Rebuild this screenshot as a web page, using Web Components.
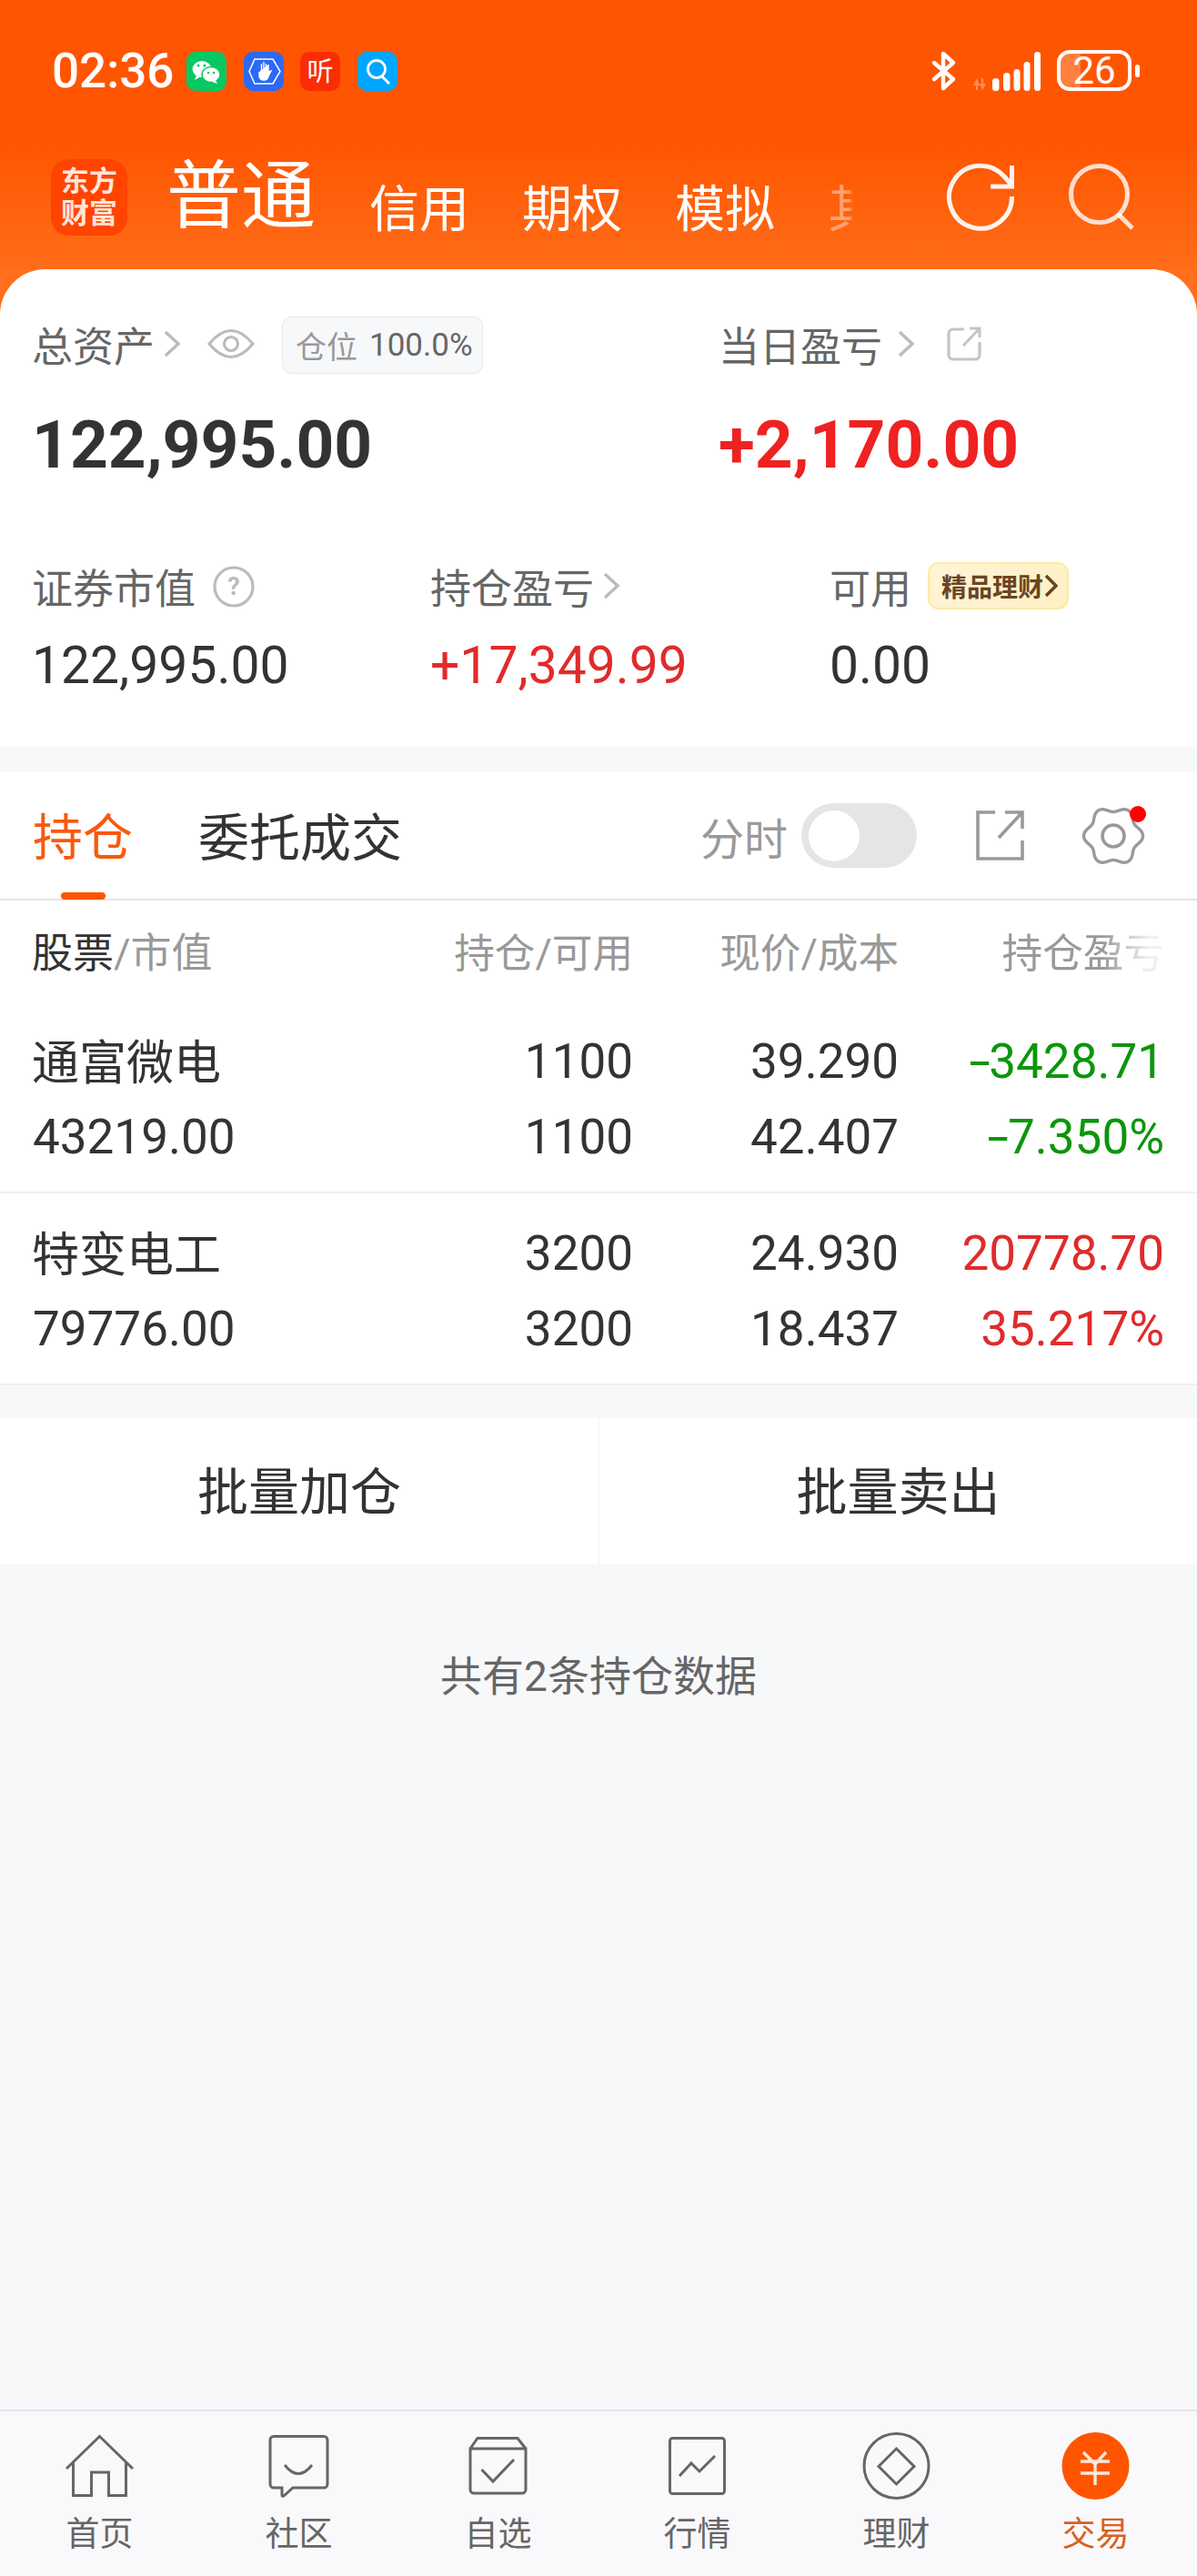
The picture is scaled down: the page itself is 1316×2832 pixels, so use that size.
<!DOCTYPE html>
<html lang="zh">
<head>
<meta charset="utf-8">
<title>交易</title>
<style>
  html, body { margin: 0; padding: 0; }
  body {
    width: 1316px;
    height: 2832px;
    overflow: hidden;
    background: #f7f8fa;
    font-family: Roboto, "Noto Sans CJK SC", sans-serif;
    color: #333;
  }
</style>
</head>
<body>
<app-shell>
  <status-bar></status-bar>
  <top-bar></top-bar>
  <asset-card>
    <asset-stat slot="top" size="lg" value="122,995.00">
      总资产<ui-icon name="chevron"></ui-icon><ui-icon name="eye"></ui-icon><pos-badge>100.0%</pos-badge>
    </asset-stat>
    <asset-stat slot="top" size="lg" tone="up" value="+2,170.00">
      当日盈亏<ui-icon name="chevron" style="margin-left:17px"></ui-icon><ui-icon name="export"></ui-icon>
    </asset-stat>
    <asset-stat slot="bottom" value="122,995.00">
      证券市值<ui-icon name="help"></ui-icon>
    </asset-stat>
    <asset-stat slot="bottom" tone="up" value="+17,349.99">
      持仓盈亏<ui-icon name="chevron"></ui-icon>
    </asset-stat>
    <asset-stat slot="bottom" value="0.00">
      可用<gold-badge>精品理财</gold-badge>
    </asset-stat>
  </asset-card>
  <position-tabs></position-tabs>
  <table-head></table-head>
  <stock-row name="通富微电" cap="43219.00" hold="1100" free="1100" price="39.290" cost="42.407" pnl="-3428.71" pct="-7.350%" tone="down"></stock-row>
  <stock-row name="特变电工" cap="79776.00" hold="3200" free="3200" price="24.930" cost="18.437" pnl="20778.70" pct="35.217%" tone="up" last></stock-row>
  <batch-actions></batch-actions>
  <list-note>共有2条持仓数据</list-note>
  <tab-bar>
    <nav-item icon="home">首页</nav-item>
    <nav-item icon="chat">社区</nav-item>
    <nav-item icon="watch">自选</nav-item>
    <nav-item icon="chart">行情</nav-item>
    <nav-item icon="wealth">理财</nav-item>
    <nav-item icon="trade" active>交易</nav-item>
  </tab-bar>
</app-shell>

<script>
"use strict";

////////////////////////////////////////////
// Constants
const ORANGE = "#ff5500";
const RED = "#e02b2b";
const GREEN = "#0a960a";

// Gear outline: six lobes, sampled around the circle
const gearPath = function (cx, cy, radius, depth) {
  const points = [];
  for (let i = 0; i < 120; i++) {
    const angle = (i / 120) * Math.PI * 2;
    const r = radius + depth * Math.cos(6 * angle);
    points.push(`${(cx + r * Math.cos(angle)).toFixed(1)} ${(cy + r * Math.sin(angle)).toFixed(1)}`);
  }
  return `M${points.join("L")}Z`;
};

// name: [width, height, markup]
const ICONS = {
  chevron: [18, 30, `<path d="M2 2 L16 15 L2 28" fill="none" stroke="#bbb" stroke-width="3.4"/>`],
  eye: [52, 36, `<path d="M2 18 Q26 -11 50 18 Q26 47 2 18Z" fill="none" stroke="#bbb" stroke-width="3.2"/><circle cx="26" cy="18" r="7.5" fill="none" stroke="#bbb" stroke-width="3.2"/>`],
  export: [38, 38, `<path d="M19 3 H7 a5 5 0 0 0 -5 5 V31 a5 5 0 0 0 5 5 H31 a5 5 0 0 0 5 -5 V17" fill="none" stroke="#c4c4c4" stroke-width="3.2"/><path d="M18 21 L36 2 M25 2 H36 V12" fill="none" stroke="#c4c4c4" stroke-width="3"/>`],
  help: [46, 46, `<circle cx="23" cy="23" r="21" fill="none" stroke="#bbb" stroke-width="3.2"/><text x="23" y="32" text-anchor="middle" font-size="27" font-weight="700" fill="#bbb">?</text>`],
  refresh: [74, 72, `<path d="M71.5 36 A34.5 34.5 0 1 1 63 14 L71 23" fill="none" stroke="#fff" stroke-opacity=".92" stroke-width="5"/><path d="M71.5 2 V25 H48" fill="none" stroke="#fff" stroke-opacity=".92" stroke-width="5"/>`],
  search: [72, 72, `<circle cx="33.5" cy="33.5" r="31" fill="none" stroke="#fff" stroke-opacity=".8" stroke-width="5"/><path d="M54 55 L70 71" stroke="#fff" stroke-opacity=".8" stroke-width="5"/>`],
  share: [53, 55, `<path d="M21 2 H2 V53 H51 V33 M32 2 H51 V20 M25 30 L51 2" fill="none" stroke="#999" stroke-width="3.6"/>`],
  gear: [66, 66, `<path d="${gearPath(32, 33, 29.5, 3)}" fill="none" stroke="#999" stroke-width="3.4" stroke-linejoin="round"/><circle cx="32" cy="33" r="12" fill="none" stroke="#999" stroke-width="3.6"/><circle cx="59" cy="9" r="9" fill="#f00"/>`],
  home: [75, 68, `<path d="M1 37 L37.5 1.5 L74 37" fill="none" stroke="#666" stroke-width="3"/><path d="M8.5 29 V66.5 H28.5 V41 H47.5 V66.5 H66.5 V29" fill="none" stroke="#666" stroke-width="3"/>`],
  chat: [67, 69, `<path d="M6 1.5 H61 a4 4 0 0 1 4 4 V54 a4 4 0 0 1 -4 4 H27 L17 67 Q15 68 15 66 V58 H6 a4 4 0 0 1 -4 -4 V5.5 a4 4 0 0 1 4 -4Z" fill="none" stroke="#666" stroke-width="3"/><path d="M18 33 Q33 52 48 33" fill="none" stroke="#666" stroke-width="3"/>`],
  watch: [65, 65, `<path d="M2 13 L10 1.5 H54 L63 13 M2 13 H63 V58 a4 4 0 0 1 -4 4 H6 a4 4 0 0 1 -4 -4Z" fill="none" stroke="#666" stroke-width="3"/><path d="M14.5 36 L27 49 L50 25" fill="none" stroke="#666" stroke-width="3"/>`],
  chart: [63, 64, `<rect x="1.5" y="1.5" width="60" height="61" rx="3" fill="none" stroke="#666" stroke-width="3"/><path d="M12 43 L25 29 L34 38 L51 21" fill="none" stroke="#666" stroke-width="3"/>`],
  wealth: [75, 74, `<circle cx="37.5" cy="37" r="35.5" fill="none" stroke="#666" stroke-width="3"/><path d="M37.5 18 L57 37.5 L37.5 57 L18 37.5Z" fill="none" stroke="#666" stroke-width="3"/>`],
  trade: [75, 74, `<circle cx="37.5" cy="37" r="37" fill="${ORANGE}"/><path d="M24 22 L37 35 L49 22 M37 35 V58 M21 32 H53 M21 45 H53" fill="none" stroke="#ffe9dc" stroke-width="3.4"/>`],
  wechat: [44, 43, `<rect width="44" height="43" rx="10" fill="#07c863"/><ellipse cx="17" cy="19" rx="10.5" ry="9" fill="#fff"/><path d="M11 26 L9 31 L16 27Z" fill="#fff"/><ellipse cx="27" cy="25" rx="10" ry="8.5" fill="#fff" stroke="#07c863" stroke-width="1.5"/><path d="M32 31 L34 35 L28 33Z" fill="#fff"/><circle cx="13" cy="15" r="1.5" fill="#07c863"/><circle cx="20" cy="15" r="1.5" fill="#07c863"/><circle cx="24" cy="23" r="1.3" fill="#07c863"/><circle cx="30" cy="23" r="1.3" fill="#07c863"/>`],
  guard: [44, 43, `<rect width="44" height="43" rx="10" fill="#2b69f6"/><path d="M12 8 H32 L40 21.5 L32 35 H12 L6 21.5Z" fill="none" stroke="#fff" stroke-width="1.5"/><path d="M17 22 V27 Q18 31 22 31 Q26 31 27 27 L30 21 L27 22 V14 M24.5 13 V21 M22 11 V21 M19.5 13 V21" fill="#fff" stroke="#fff" stroke-width="1.4"/>`],
  listen: [44, 43, `<rect width="44" height="43" rx="10" fill="#fa2d05"/><text x="22" y="32" text-anchor="middle" font-size="29" fill="#fff" font-family="'Noto Sans CJK SC'">听</text>`],
  lens: [44, 43, `<rect width="44" height="43" rx="10" fill="#00a6ff"/><circle cx="21" cy="19" r="9.5" fill="none" stroke="#fff" stroke-width="2.8"/><path d="M27 27 L35 35" stroke="#fff" stroke-width="2.8"/>`],
  bluetooth: [27, 42, `<path d="M3 12 L24 30 L13 40 V2 L24 12 L3 30" fill="none" stroke="#fff" stroke-width="4.4" stroke-linejoin="round" stroke-linecap="round"/>`],
  signal: [76, 43, `<g fill="#fff" fill-opacity=".35"><path d="M1 37 L5 29 L8 37 H6 V42 H4 V37Z"/><path d="M10 29 H12 V35 H15 L11 42 L8 35 H10Z"/></g><g fill="#fff"><rect x="22" y="29" width="7.5" height="14" rx="3.5"/><rect x="34" y="23" width="7.5" height="20" rx="3.5"/><rect x="45.5" y="19" width="7" height="24" rx="3.5"/><rect x="56.5" y="11" width="7" height="32" rx="3.5"/><rect x="68" y="0" width="7" height="43" rx="3.5"/></g>`],
};

////////////////////////////////////////////
// Web Components
class BaseElement extends HTMLElement {
  constructor(markup) {
    super();
    this._root = this.attachShadow({ mode: "open" });
    this._root.innerHTML = markup;
  }
}

class UiIcon extends HTMLElement {
  connectedCallback() {
    const [w, h, body] = ICONS[this.getAttribute("name")];
    const root = this.shadowRoot ?? this.attachShadow({ mode: "open" });
    root.innerHTML = `
      <style>:host{display:inline-flex;flex:none} svg{display:block;overflow:visible}</style>
      <svg width="${w}" height="${h}" viewBox="0 0 ${w} ${h}">${body}</svg>`;
  }
}

class AppShell extends BaseElement {
  constructor() {
    super(`
      <style>
        :host { display: flex; flex-direction: column; width: 1316px; height: 2832px; }
      </style>
      <slot></slot>`);
  }
}

class StatusBar extends BaseElement {
  constructor() {
    super(`
      <style>
        :host {
          display: flex; align-items: flex-start; height: 157px; box-sizing: border-box;
          padding: 57px 63px 0 57px; color: #fff; background: ${ORANGE};
        }
        .time { font-size: 53px; line-height: 43px; width: 149px; font-weight: 500; }
        .apps { display: flex; gap: 18.5px; margin-left: -1px; }
        .right { margin-left: auto; display: flex; align-items: flex-start; }
        ui-icon[name=signal] { margin-left: 18px; }
        .battery {
          margin: -2px 0 0 17px; width: 82px; height: 45px; box-sizing: border-box;
          border: 4px solid #fff; border-radius: 14px; font-size: 42px; line-height: 37px;
          text-align: center; font-weight: 400;
          background: linear-gradient(to right, rgba(255,255,255,.25) 22px, transparent 22px);
        }
        .nub { width: 5px; height: 14px; margin: 14px 0 0 4px; border-radius: 3px; background: #fff; }
      </style>
      <div class="time">02:36</div>
      <div class="apps">
        <ui-icon name="wechat"></ui-icon><ui-icon name="guard"></ui-icon>
        <ui-icon name="listen"></ui-icon><ui-icon name="lens"></ui-icon>
      </div>
      <div class="right">
        <ui-icon name="bluetooth"></ui-icon><ui-icon name="signal"></ui-icon>
        <div class="battery">26</div><div class="nub"></div>
      </div>`);
  }
}

class TopBar extends BaseElement {
  constructor() {
    super(`
      <style>
        :host {
          display: flex; align-items: flex-start; height: 139px; box-sizing: border-box;
          padding: 18px 69px 0 56px; color: #fff;
          background: linear-gradient(#ff5500, #ff6d1a);
        }
        .logo {
          width: 84px; height: 84px; border-radius: 20px; background: #ff4400; color: #ffe6da;
          font-size: 31px; line-height: 35px; font-weight: 700; text-align: center;
          display: flex; align-items: center; justify-content: center; flex: none;
        }
        .main { font-size: 82px; line-height: 90px; margin: -4px 0 0 43px; }
        .strip { display: flex; gap: 58px; margin: 19px 0 0 59px; font-size: 55px; line-height: 72px; }
        .more {
          color: rgba(255,255,255,.4);
          -webkit-mask-image: linear-gradient(to right, #000 44%, transparent 50%);
          mask-image: linear-gradient(to right, #000 44%, transparent 50%);
        }
        .tools { margin: 5px 0 0 auto; display: flex; gap: 60px; align-items: flex-start; }
      </style>
      <div class="logo"><div>东方<br>财富</div></div>
      <div class="main">普通</div>
      <div class="strip"><span>信用</span><span>期权</span><span>模拟</span><span class="more">其</span></div>
      <div class="tools"><ui-icon name="refresh"></ui-icon><ui-icon name="search"></ui-icon></div>`);
  }
}

class AssetCard extends BaseElement {
  constructor() {
    super(`
      <style>
        :host { display: block; background: #ff6f1e; }
        .sheet { background: #fff; border-radius: 50px 50px 0 0; height: 525px; box-sizing: border-box; padding: 52px 0 0 35px; }
        .top { display: grid; grid-template-columns: 755px 1fr; }
        .bottom { display: grid; grid-template-columns: 438px 439px 1fr; margin-top: 80px; }
      </style>
      <div class="sheet">
        <div class="top"><slot name="top"></slot></div>
        <div class="bottom"><slot name="bottom"></slot></div>
      </div>`);
  }
}

class AssetStat extends BaseElement {
  constructor() {
    super(`
      <style>
        :host { display: block; --value-size: 57px; --value-gap: 13px; --value-weight: 400; --value-color: #333; }
        :host([size=lg]) { --value-size: 73px; --value-gap: 36px; --value-weight: 700; }
        :host([tone=up]) { --value-color: ${RED}; }
        :host([size=lg][tone=up]) { --value-color: #ee2222; }
        .label { display: flex; align-items: center; height: 60px; font-size: 45px; color: #666; }
        ::slotted(ui-icon) { margin-left: 10px; }
        ::slotted(ui-icon[name=eye]) { margin-left: 30px; }
        ::slotted(ui-icon[name=export]) { margin-left: 36px; }
        ::slotted(ui-icon[name=help]) { margin-left: 19px; margin-top: 2px; }
        .value { height: 90px; line-height: 90px; margin-top: var(--value-gap); font-size: var(--value-size); font-weight: var(--value-weight); color: var(--value-color); }
      </style>
      <div class="label"><slot></slot></div>
      <div class="value"></div>`);
  }
  connectedCallback() {
    this._root.querySelector(".value").textContent = this.getAttribute("value");
  }
}

class PosBadge extends BaseElement {
  constructor() {
    super(`
      <style>
        :host {
          display: inline-flex; align-items: center; height: 63px; margin: 2px 0 0 30px; padding: 0 10px 0 14px;
          box-sizing: border-box; background: #f7f8fa; border: 1px solid #e8e9ec; border-radius: 10px;
          font-size: 35px; color: #666;
        }
        span { color: #999; font-size: 34px; margin-right: 13px; }
      </style>
      <span>仓位</span><slot></slot>`);
  }
}

class GoldBadge extends BaseElement {
  constructor() {
    super(`
      <style>
        :host {
          display: inline-flex; align-items: center; height: 52px; margin-left: 18px; padding: 0 10px 0 13px;
          box-sizing: border-box; border: 2px solid #fdeaa3; border-radius: 12px;
          background: linear-gradient(135deg, #fff4d6, #fff0c4); color: #6b4423; font-size: 28px; font-weight: 700;
        }
        svg { margin-left: 1px; }
      </style>
      <slot></slot><svg width="15" height="26" viewBox="0 0 15 26"><path d="M2 2 L13 13 L2 24" fill="none" stroke="#6b4423" stroke-width="3.6"/></svg>`);
  }
}

class PositionTabs extends BaseElement {
  constructor() {
    super(`
      <style>
        :host {
          display: flex; align-items: center; height: 141px; box-sizing: border-box; margin-top: 28px;
          padding: 0 58px 0 36px; background: #fff; border-bottom: 2px solid #e6e6e6;
          font-size: 55px; position: relative;
        }
        .on, .off { margin-top: -5px; }
        .on { color: #f8590d; }
        .on::after {
          content: ""; position: absolute; left: 67px; bottom: -1px; width: 49px; height: 8px;
          border-radius: 4px; background: ${ORANGE};
        }
        .off { margin-left: 72px; color: #333; font-size: 56px; }
        .label { margin-left: auto; font-size: 48px; color: #999; }
        .toggle {
          width: 127px; height: 71px; margin: 0 65px 0 15px; box-sizing: border-box; padding: 8px;
          border-radius: 36px; background: #e4e5e7;
        }
        .toggle div { width: 56px; height: 56px; border-radius: 50%; background: #fff; }
        ui-icon[name=gear] { margin-left: 66px; }
      </style>
      <div class="on">持仓</div><div class="off">委托成交</div>
      <div class="label">分时</div>
      <div class="toggle"><div></div></div>
      <ui-icon name="share"></ui-icon><ui-icon name="gear"></ui-icon>`);
  }
}

class TableHead extends BaseElement {
  constructor() {
    super(`
      <style>
        :host {
          display: grid; grid-template-columns: 1fr 202px 292px 292px; align-items: center;
          height: 111px; box-sizing: border-box; padding: 0 36px 3px; background: #fff; font-size: 44.6px; color: #999; text-align: right;
        }
        .first { text-align: left; font-size: 45px; margin-left: -1px; }
        .first b { font-weight: 400; color: #333; }
        .fade { -webkit-mask-image: linear-gradient(to right, #000 62%, rgba(0,0,0,.15) 90%); mask-image: linear-gradient(to right, #000 62%, rgba(0,0,0,.15) 90%); justify-self: end; }
      </style>
      <div class="first"><b>股票</b>/市值</div><div>持仓/可用</div><div>现价/成本</div><div class="fade">持仓盈亏</div>`);
  }
}

class StockRow extends BaseElement {
  constructor() {
    super(`
      <style>
        :host {
          display: grid; grid-template-columns: 1fr 202px 292px 292px; grid-auto-rows: 83px;
          align-items: center; height: 211px; box-sizing: border-box; padding: 24px 36px 0;
          background: #fff; border-bottom: 2px solid #f0f0f0; font-size: 53px; color: #333; text-align: right;
          --tone: ${RED};
        }
        :host([tone=down]) { --tone: ${GREEN}; }
        .left { text-align: left; }
        .name { font-size: 52px; margin: -5px 0 0 -1px; }
        .tone { color: var(--tone); }
        .minus { display: inline-block; margin-right: 3px; transform: scaleX(1.6); }
      </style>
      <div class="left name" data-k="name"></div><div data-k="hold"></div><div data-k="price"></div><div class="tone" data-k="pnl"></div>
      <div class="left" data-k="cap"></div><div data-k="free"></div><div data-k="cost"></div><div class="tone" data-k="pct"></div>`);
  }
  connectedCallback() {
    this._root.querySelectorAll("[data-k]").forEach((el) => {
      const text = this.getAttribute(el.dataset.k);
      if (text.startsWith("-")) {
        // Reference draws a wider minus than the font's hyphen
        const minus = document.createElement("span");
        minus.className = "minus";
        minus.textContent = "-";
        el.replaceChildren(minus, text.slice(1));
      } else {
        el.textContent = text;
      }
    });
  }
}

class BatchActions extends BaseElement {
  constructor() {
    super(`
      <style>
        :host { display: grid; grid-template-columns: 1fr 1fr; height: 161px; margin-top: 36px; background: #fff; font-size: 56px; color: #333; }
        div { display: flex; align-items: center; justify-content: center; padding-bottom: 8px; }
        div + div { border-left: 1px solid #f2f2f2; }
      </style>
      <div>批量加仓</div><div>批量卖出</div>`);
  }
}

class ListNote extends BaseElement {
  constructor() {
    super(`
      <style>
        :host { display: block; margin-top: 93px; text-align: center; font-size: 46px; line-height: 60px; color: #666; }
      </style>
      <slot></slot>`);
  }
}

class TabBar extends BaseElement {
  constructor() {
    super(`
      <style>
        :host {
          display: grid; grid-template-columns: repeat(6, 1fr); height: 183px; box-sizing: border-box;
          margin-top: auto; padding-right: 2px; background: #f9f9fb; border-top: 2px solid #e6e7ea;
        }
      </style>
      <slot></slot>`);
  }
}

class NavItem extends BaseElement {
  constructor() {
    super(`
      <style>
        :host { display: flex; flex-direction: column; align-items: center; font-size: 37px; color: #666; }
        :host([active]) { color: #d9611e; }
        .icon { height: 74px; margin-top: 23px; display: flex; align-items: center; }
        .text { margin-top: 17px; line-height: 44px; }
      </style>
      <div class="icon"></div>
      <div class="text"><slot></slot></div>`);
  }
  connectedCallback() {
    const icon = document.createElement("ui-icon");
    icon.setAttribute("name", this.getAttribute("icon"));
    this._root.querySelector(".icon").replaceChildren(icon);
  }
}

////////////////////////////////////////////
// Executed Code
customElements.define("ui-icon", UiIcon);
customElements.define("app-shell", AppShell);
customElements.define("status-bar", StatusBar);
customElements.define("top-bar", TopBar);
customElements.define("asset-card", AssetCard);
customElements.define("asset-stat", AssetStat);
customElements.define("pos-badge", PosBadge);
customElements.define("gold-badge", GoldBadge);
customElements.define("position-tabs", PositionTabs);
customElements.define("table-head", TableHead);
customElements.define("stock-row", StockRow);
customElements.define("batch-actions", BatchActions);
customElements.define("list-note", ListNote);
customElements.define("tab-bar", TabBar);
customElements.define("nav-item", NavItem);
</script>
</body>
</html>
